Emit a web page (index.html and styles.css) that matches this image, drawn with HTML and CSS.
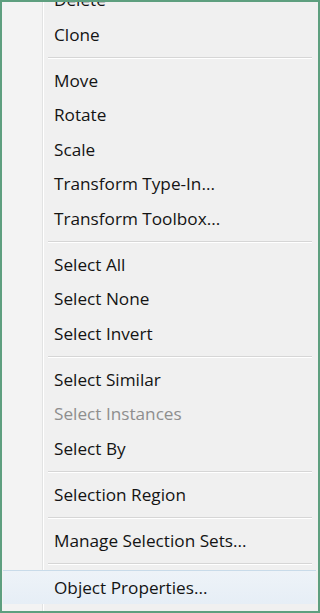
FILE: index.html
```html
<!DOCTYPE html>
<html>
<head>
<meta charset="utf-8">
<link rel="stylesheet" href="styles.css">
</head>
<body>
<div class="menu">
  <ul class="list">
    <li class="item">Delete</li>
    <li class="item">Clone</li>
    <li class="sep"></li>
    <li class="item">Move</li>
    <li class="item">Rotate</li>
    <li class="item">Scale</li>
    <li class="item">Transform Type-In...</li>
    <li class="item">Transform Toolbox...</li>
    <li class="sep"></li>
    <li class="item">Select All</li>
    <li class="item">Select None</li>
    <li class="item">Select Invert</li>
    <li class="sep"></li>
    <li class="item">Select Similar</li>
    <li class="item disabled">Select Instances</li>
    <li class="item">Select By</li>
    <li class="sep"></li>
    <li class="item">Selection Region</li>
    <li class="sep"></li>
    <li class="item">Manage Selection Sets...</li>
    <li class="sep"></li>
    <li class="item hover">Object Properties...</li>
  </ul>
</div>
</body>
</html>
```
FILE: styles.css
```css
html, body {
  margin: 0;
  padding: 0;
  background: #ffffff;
}
.menu {
  box-sizing: border-box;
  width: 320px;
  height: 613px;
  border: 2px solid #5e9f7f;
  overflow: hidden;
  background: #f0f0f0;
}
.list {
  list-style: none;
  margin: -19px 0 0 0;
  padding: 0 0 40px 0;
  background: linear-gradient(to right, #f3f3f3 0, #f3f3f3 40px, #e2e3e3 40px, #e2e3e3 41px, #ffffff 41px, #ffffff 42px, #f0f0f0 42px);
  font-family: "Open Sans", "Noto Sans", sans-serif;
  font-size: 17.2px;
  color: #141414;
}
.item {
  height: 34.5px;
  line-height: 34.5px;
  padding-left: 52px;
  white-space: nowrap;
}
.item.disabled {
  color: #8e8e8e;
}
.item.hover {
  margin: 0 2px 0 1px;
  padding-left: 51px;
  border-top: 1px solid #c9dbe9;
  height: 33.5px;
  line-height: 33.5px;
  background: linear-gradient(to bottom, #eef3f8, #e6eef6);
}
.sep {
  height: 11.5px;
  box-sizing: border-box;
  padding-top: 5px;
  margin-left: 46px;
  margin-right: 6px;
}
.sep::before {
  content: "";
  display: block;
  height: 1px;
  background: #d6d6d6;
  border-bottom: 1px solid #ffffff;
}
```
